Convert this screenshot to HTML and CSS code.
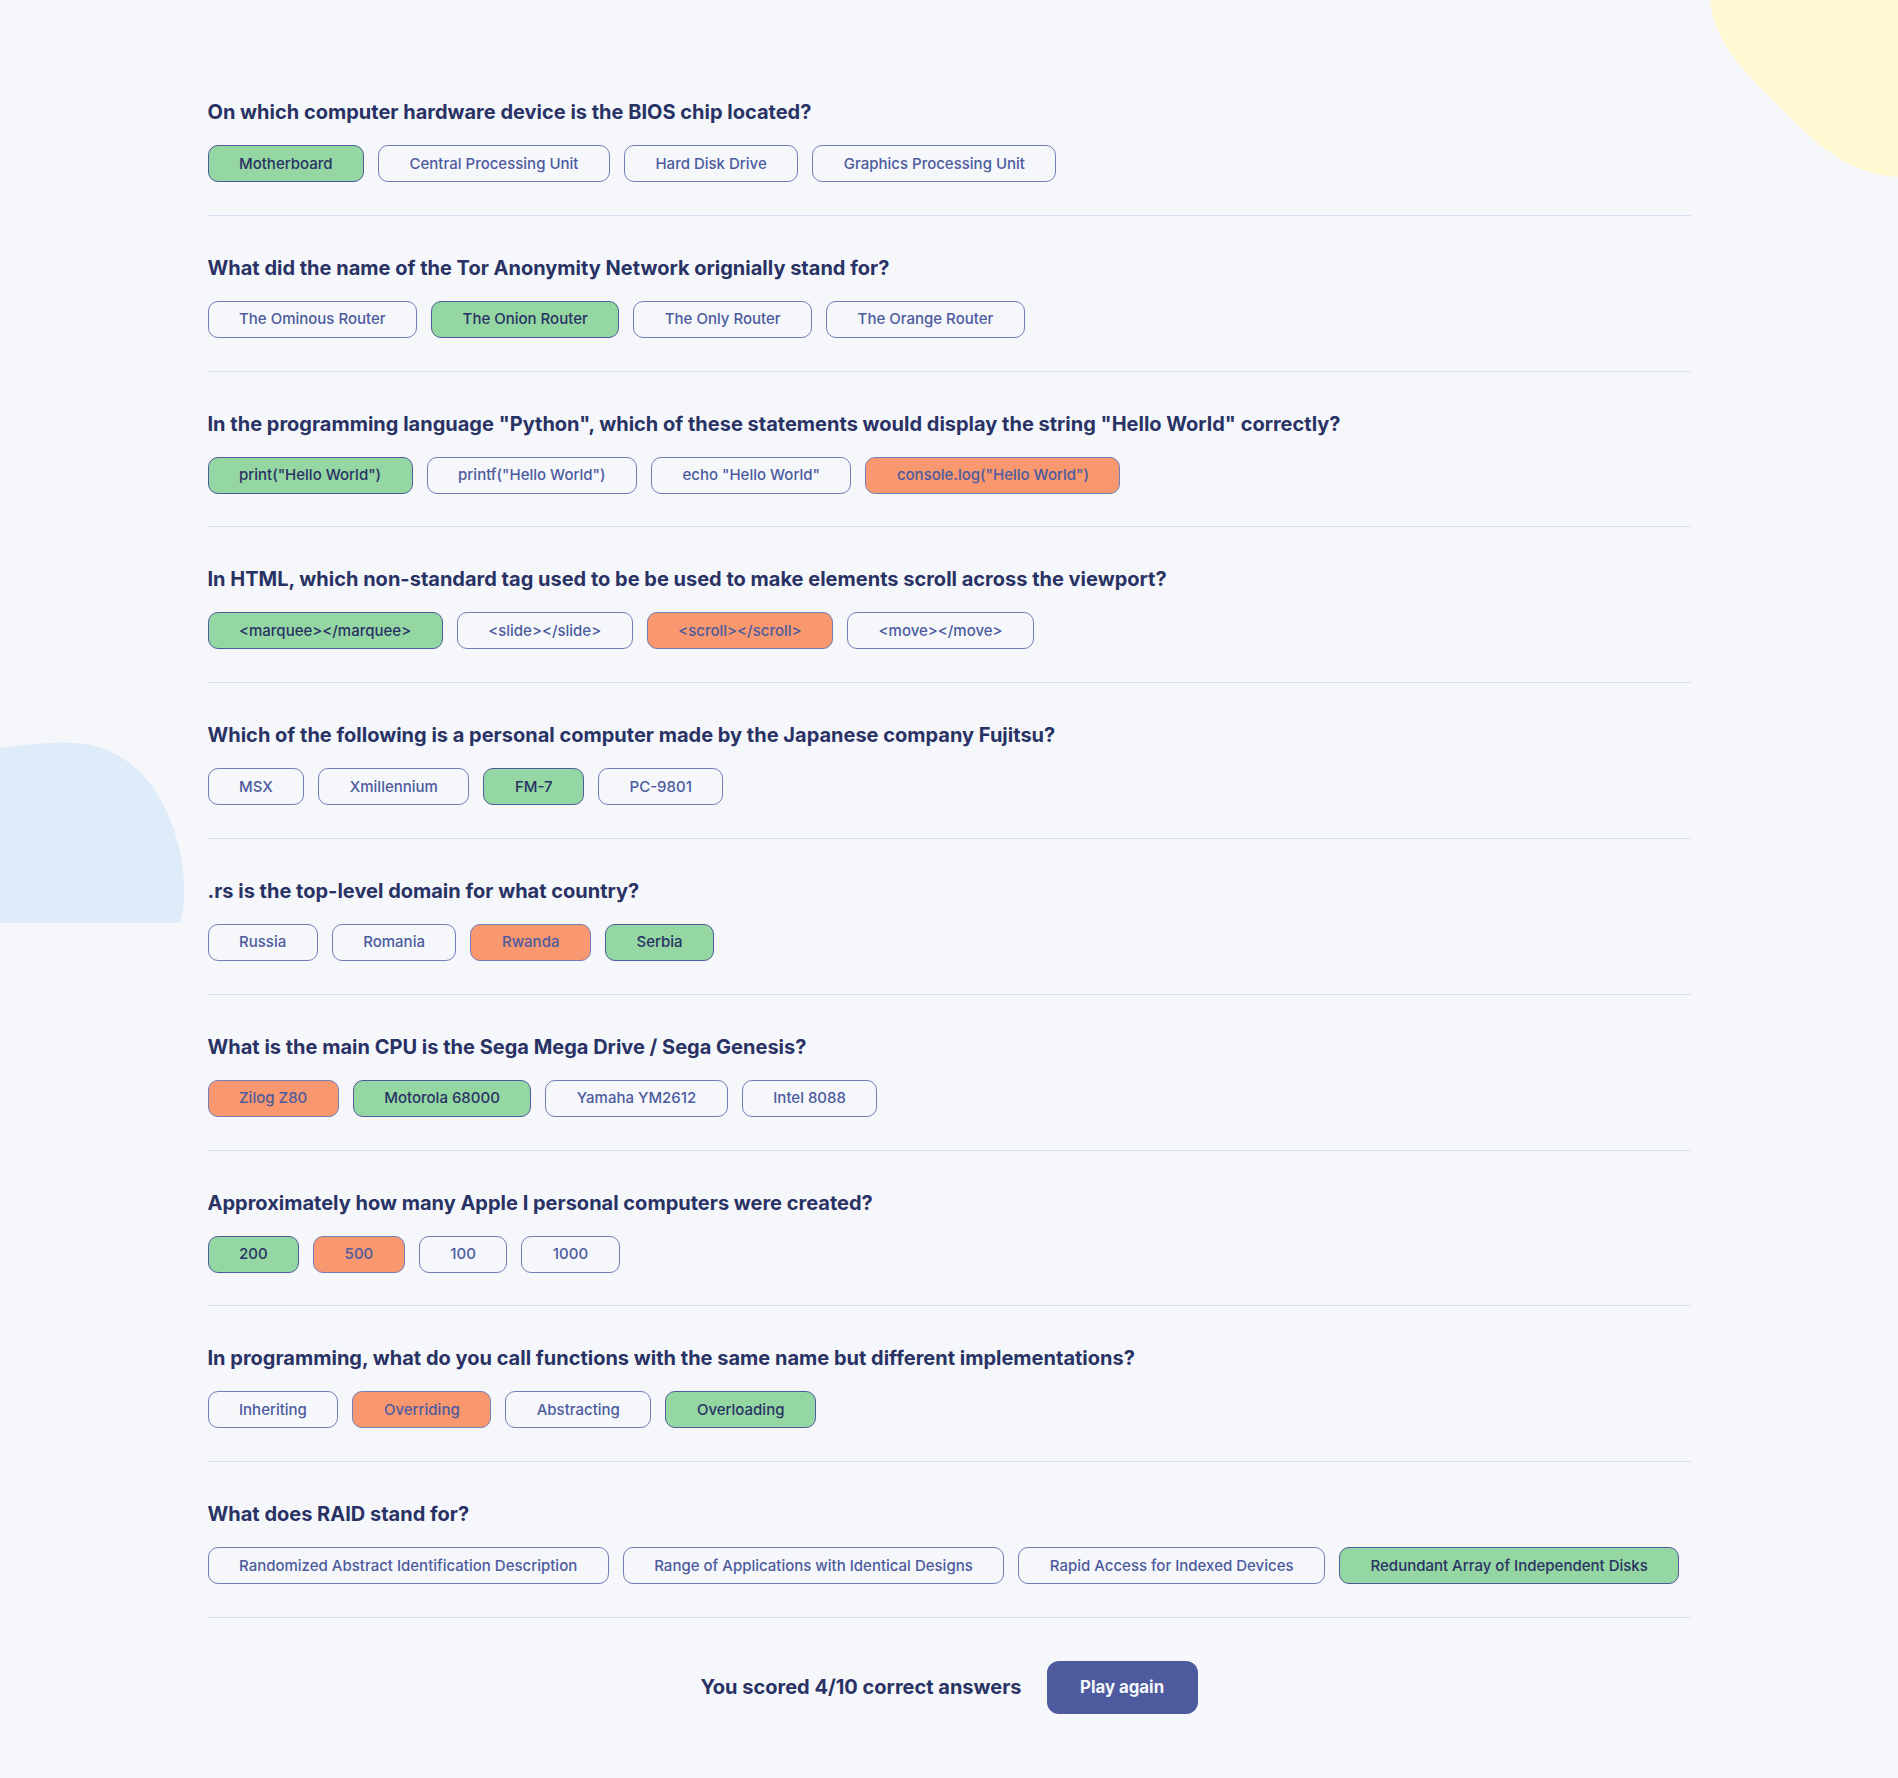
FILE: index.html
```html
<!DOCTYPE html>
<html lang="en">
<head>
<meta charset="utf-8">
<title>Quizzical</title>
<link rel="stylesheet" href="styles.css">
</head>
<body>
<svg class="blob blob-yellow" width="188" height="178" viewBox="0 0 188 178"><path d="M0 0 C4 38 28 66 60 97 C100 136 128 172 188 177 L188 0 Z" fill="#FFF8D0"/></svg>
<svg class="blob blob-blue" width="186" height="184" viewBox="0 0 186 184"><path d="M0 6 C30 2 60 -1 85 2 C150 12 180 80 184 140 C185 158 183 172 179 181 L0 181 Z" fill="#DEEBF8"/></svg>
<main class="quiz">
  <section class="question">
    <h2 class="q-title">On which computer hardware device is the BIOS chip located?</h2>
    <div class="answers">
      <button class="answer correct">Motherboard</button>
      <button class="answer">Central Processing Unit</button>
      <button class="answer">Hard Disk Drive</button>
      <button class="answer">Graphics Processing Unit</button>
    </div>
  </section>
  <section class="question">
    <h2 class="q-title">What did the name of the Tor Anonymity Network orignially stand for?</h2>
    <div class="answers">
      <button class="answer">The Ominous Router</button>
      <button class="answer correct">The Onion Router</button>
      <button class="answer">The Only Router</button>
      <button class="answer">The Orange Router</button>
    </div>
  </section>
  <section class="question">
    <h2 class="q-title">In the programming language "Python", which of these statements would display the string "Hello World" correctly?</h2>
    <div class="answers">
      <button class="answer correct">print("Hello World")</button>
      <button class="answer">printf("Hello World")</button>
      <button class="answer">echo "Hello World"</button>
      <button class="answer wrong">console.log("Hello World")</button>
    </div>
  </section>
  <section class="question">
    <h2 class="q-title">In HTML, which non-standard tag used to be be used to make elements scroll across the viewport?</h2>
    <div class="answers">
      <button class="answer correct">&lt;marquee&gt;&lt;/marquee&gt;</button>
      <button class="answer">&lt;slide&gt;&lt;/slide&gt;</button>
      <button class="answer wrong">&lt;scroll&gt;&lt;/scroll&gt;</button>
      <button class="answer">&lt;move&gt;&lt;/move&gt;</button>
    </div>
  </section>
  <section class="question">
    <h2 class="q-title">Which of the following is a personal computer made by the Japanese company Fujitsu?</h2>
    <div class="answers">
      <button class="answer">MSX</button>
      <button class="answer">Xmillennium</button>
      <button class="answer correct">FM-7</button>
      <button class="answer">PC-9801</button>
    </div>
  </section>
  <section class="question">
    <h2 class="q-title">.rs is the top-level domain for what country?</h2>
    <div class="answers">
      <button class="answer">Russia</button>
      <button class="answer">Romania</button>
      <button class="answer wrong">Rwanda</button>
      <button class="answer correct">Serbia</button>
    </div>
  </section>
  <section class="question">
    <h2 class="q-title">What is the main CPU is the Sega Mega Drive / Sega Genesis?</h2>
    <div class="answers">
      <button class="answer wrong">Zilog Z80</button>
      <button class="answer correct">Motorola 68000</button>
      <button class="answer">Yamaha YM2612</button>
      <button class="answer">Intel 8088</button>
    </div>
  </section>
  <section class="question">
    <h2 class="q-title">Approximately how many Apple I personal computers were created?</h2>
    <div class="answers">
      <button class="answer correct">200</button>
      <button class="answer wrong">500</button>
      <button class="answer">100</button>
      <button class="answer">1000</button>
    </div>
  </section>
  <section class="question">
    <h2 class="q-title">In programming, what do you call functions with the same name but different implementations?</h2>
    <div class="answers">
      <button class="answer">Inheriting</button>
      <button class="answer wrong">Overriding</button>
      <button class="answer">Abstracting</button>
      <button class="answer correct">Overloading</button>
    </div>
  </section>
  <section class="question">
    <h2 class="q-title">What does RAID stand for?</h2>
    <div class="answers">
      <button class="answer">Randomized Abstract Identification Description</button>
      <button class="answer">Range of Applications with Identical Designs</button>
      <button class="answer">Rapid Access for Indexed Devices</button>
      <button class="answer correct">Redundant Array of Independent Disks</button>
    </div>
  </section>
  <div class="result">
    <p class="score">You scored 4/10 correct answers</p>
    <button class="play">Play again</button>
  </div>
</main>
</body>
</html>
```

FILE: styles.css
```css
* { box-sizing: border-box; }

html, body {
  margin: 0;
  padding: 0;
}

body {
  background: #F5F7FB;
  font-family: Inter, "Noto Sans", sans-serif;
  color: #293264;
  min-height: 1778px;
  position: relative;
  overflow: hidden;
}

.blob {
  position: absolute;
  z-index: 0;
}

.blob-yellow {
  top: 0;
  right: 0;
}

.blob-blue {
  left: 0;
  top: 742px;
}

.quiz {
  position: relative;
  z-index: 1;
  width: 1483px;
  margin: 0 auto;
  padding-top: 100px;
}

.question {
  padding: 40px 0 32.8px;
  border-bottom: 1px solid #DBDEF0;
}

.question:first-child {
  padding-top: 0;
}

.q-title {
  margin: 0 0 21px;
  font-size: 20px;
  font-weight: 700;
  line-height: 24px;
  color: #293264;
}

.answers {
  display: flex;
  gap: 14px;
}

.answer {
  height: 37px;
  padding: 0 30.5px;
  border: 1.5px solid #737DB8;
  border-radius: 10px;
  background: transparent;
  font-family: Inter, "Noto Sans", sans-serif;
  font-size: 15px;
  line-height: 18px;
  font-weight: 500;
  color: #4D5B9E;
}

.answer.correct {
  background: #94D7A2;
  border-color: #4D5B9E;
  color: #293264;
}

.answer.wrong {
  background: #F9976F;
  border-color: #737DB8;
  color: #4D5B9E;
}

.result {
  display: flex;
  justify-content: center;
  align-items: center;
  gap: 25px;
  padding-top: 43px;
}

.score {
  margin: 0;
  font-size: 20px;
  line-height: 24px;
  font-weight: 700;
  color: #293264;
}

.play {
  height: 53px;
  padding: 0 33.5px;
  border: none;
  border-radius: 12px;
  background: #4D5B9E;
  color: #F5F7FB;
  font-family: Inter, "Noto Sans", sans-serif;
  font-size: 16.8px;
  font-weight: 700;
}
```
